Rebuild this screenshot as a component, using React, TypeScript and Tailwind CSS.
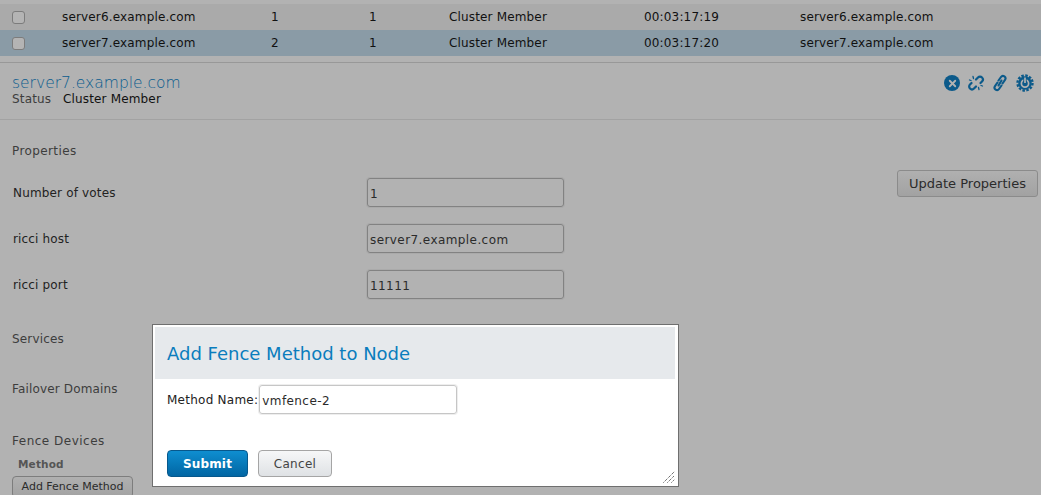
import { X } from "lucide-react";

const rows = [
  { name: "server6.example.com", votes: "1", exp: "1", status: "Cluster Member", uptime: "00:03:17:19", bg: "bg-[#aaaaaa]" },
  { name: "server7.example.com", votes: "2", exp: "1", status: "Cluster Member", uptime: "00:03:17:20", bg: "bg-[#8a9ba6]" },
];

const fields = [
  { label: "Number of votes", value: "1" },
  { label: "ricci host", value: "server7.example.com" },
  { label: "ricci port", value: "11111" },
];

function NodeActions() {
  return (
    <div className="flex items-center gap-[7px] text-[#0c5a8a]">
      <span className="flex h-4 w-4 items-center justify-center rounded-full bg-[#0c5a8a]">
        <X size={11} strokeWidth={4} className="text-[#b2b2b2]" />
      </span>
      {/* broken link */}
      <svg width="18" height="18" viewBox="0 0 18 18" fill="none" stroke="currentColor" strokeWidth="2.2" strokeLinecap="round">
        <path d="M9 5.500 11 3.500a2.800 2.800 0 0 1 4 4L13.500 9" />
        <path d="M9 12.500 7 14.500a2.800 2.800 0 0 1-4-4L4.500 9" />
        <path d="M6.500 4.500 6 2.500M4 6.500 2.500 6M11.500 13.500 12 15.500M14 11.500 15.500 12" strokeWidth="1.300" />
      </svg>
      <svg width="14" height="18" viewBox="0 0 14 18" fill="none" stroke="currentColor" strokeWidth="2.100" strokeLinecap="round" className="mx-px">
        <path d="M5.500 6.500 8 3a2.400 2.400 0 0 1 4 2.800L9.500 9.500" />
        <path d="M8.500 11.500 6 15a2.400 2.400 0 0 1-4-2.800L4.500 8.500" />
        <path d="M5.500 11.500 8.500 6.500" />
      </svg>
      <svg width="18" height="18" viewBox="0 0 18 18" className="ml-px">
        <circle cx="9" cy="9" r="7.500" fill="none" stroke="currentColor" strokeWidth="2.400" strokeDasharray="2.500 1.430" />
        <circle cx="9" cy="9" r="6.800" fill="currentColor" />
        <circle cx="9" cy="9.500" r="3.600" fill="none" stroke="#b2b2b2" strokeWidth="1.700" />
        <path d="M9 3.500v6" stroke="#0c5a8a" strokeWidth="3.400" />
        <path d="M9 3.500v5.500" stroke="#b2b2b2" strokeWidth="1.700" />
      </svg>
    </div>
  );
}

export default function App() {
  return (
    <div className="relative h-[495px] w-[1041px] overflow-hidden bg-[#b2b2b2] font-['DejaVu_Sans',sans-serif] text-[12px] tracking-[0.16px] text-[#111]">
      {/* node table */}
      <div className="pt-1">
        {rows.map((r) => (
          <div key={r.name} className={`grid h-[26px] grid-cols-[62px_209px_98px_80px_195px_156px_1fr] items-center ${r.bg}`}>
            <span className="ml-3 h-[13px] w-[13px] rounded-[3px] border border-[#7c7c7c] bg-[#b4b4b4]" />
            <span>{r.name}</span>
            <span>{r.votes}</span>
            <span>{r.exp}</span>
            <span>{r.status}</span>
            <span>{r.uptime}</span>
            <span>{r.name}</span>
          </div>
        ))}
      </div>

      {/* node header */}
      <div className="mt-[6px] flex h-[58px] items-start justify-between border-t border-b border-t-[#989898] border-b-[#a2a2a2] pr-[7px] pl-3 pt-[11px]">
        <div>
          <div className="text-[15.500px] leading-[18px] font-extralight tracking-normal text-[#0a5c8e]">server7.example.com</div>
          <div className="flex leading-[15px]">
            <span className="w-[51px] text-[#3d3d3d]">Status</span>
            <span>Cluster Member</span>
          </div>
        </div>
        <NodeActions />
      </div>

      {/* properties */}
      <div className="flex items-start justify-between pr-[3px] pl-3">
        <div>
          <div className="mt-[24px] h-[14px] leading-[14px] tracking-[0.4px] text-[#3d3d3d]">Properties</div>
          <div className="mt-[20px] flex flex-col gap-[17px]">
            {fields.map((f) => (
              <div key={f.label} className="flex items-center pl-px">
                <span className="w-[354px] text-[#222]">{f.label}</span>
                <div className="flex h-[29px] w-[197px] items-center rounded-[3px] border border-[#828282] pt-[2px] pl-[2px] tracking-[0.42px] text-[#2b2b2b] shadow-[0_0_0_1px_#aaaaaa]">
                  {f.value}
                </div>
              </div>
            ))}
          </div>
        </div>
        <button className="mt-[50px] h-[27px] w-[141px] rounded-[3px] border border-[#8b8b8b] bg-gradient-to-b from-[#b0b0b0] to-[#a2a2a2] text-[13px] tracking-normal text-[#2b2b2b]">
          Update Properties
        </button>
      </div>

      {/* collapsed sections */}
      <div className="mt-[32px] flex flex-col pl-3 text-[#3d3d3d]">
        <div className="h-[50px] leading-[16px]">Services</div>
        <div className="h-[52px] leading-[16px]">Failover Domains</div>
        <div className="leading-[16px] tracking-[0.5px]">Fence Devices</div>
        <div className="mt-[9px] pl-[6px] text-[10.500px] font-bold leading-[13px] text-[#555]">Method</div>
        <button className="mt-[5px] h-[22px] w-[121px] rounded-[4px] border border-[#7d7d7d] bg-gradient-to-b from-[#b0b0b0] to-[#a2a2a2] text-[11px] tracking-normal text-[#2b2b2b]">
          Add Fence Method
        </button>
      </div>

      {/* modal */}
      <div className="absolute top-[324px] left-[152px] h-[163px] w-[527px] border border-[#6f6f6f] bg-white p-[2px] pr-[3px]">
        <div className="flex h-[52px] items-center bg-[#e6e9ec] pl-3 text-[18px] tracking-normal text-[#0a7dbd]">
          Add Fence Method to Node
        </div>
        <div className="mt-[6px] flex items-center pl-3 text-[#222]">
          <span className="mr-px pt-px tracking-[0.25px]">Method Name:</span>
          <div className="flex h-[29px] w-[198px] items-center rounded-[3px] border border-[#c6c6c6] pt-[2px] pl-[2px] tracking-[0.42px] text-[#2b2b2b] shadow-[0_0_0_1px_#eeeeee]">
            vmfence-2
          </div>
        </div>
        <div className="mt-[36px] flex gap-[10px] pl-3">
          <button className="h-[27px] w-[81px] rounded-[4px] border border-[#07588c] bg-gradient-to-b from-[#0f8ed0] to-[#0266a3] font-bold text-white">
            Submit
          </button>
          <button className="h-[27px] w-[74px] rounded-[4px] border border-[#a5a5a5] bg-gradient-to-b from-[#f6f7f8] to-[#dfe2e5] tracking-[0.3px] text-[#444]">
            Cancel
          </button>
        </div>
        <svg width="12" height="12" viewBox="0 0 12 12" stroke="#333" strokeDasharray="1 1" className="absolute right-[3px] bottom-[3px]">
          <path d="M0.500 11.500 11.500 0.500M4.500 11.500 11.500 4.500M8.500 11.500 11.500 8.500" />
        </svg>
      </div>
    </div>
  );
}
